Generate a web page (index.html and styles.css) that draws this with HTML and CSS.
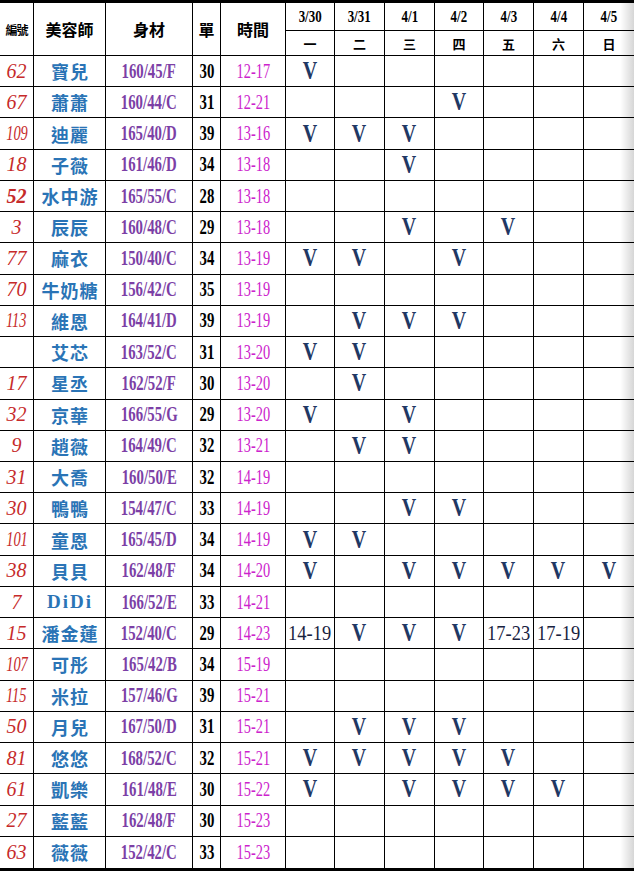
FILE: index.html
```html
<!DOCTYPE html>
<html lang="zh-Hant">
<head>
<meta charset="utf-8">
<title>美容師排班表</title>
<link rel="stylesheet" href="styles.css">
</head>
<body>
<div class="sheet">
  <div class="c hd hd-small span2">編號</div>
  <div class="c hd span2">美容師</div>
  <div class="c hd span2">身材</div>
  <div class="c hd span2">單</div>
  <div class="c hd span2">時間</div>
  <div class="c date"><span>3/30</span></div>
  <div class="c date"><span>3/31</span></div>
  <div class="c date"><span>4/1</span></div>
  <div class="c date"><span>4/2</span></div>
  <div class="c date"><span>4/3</span></div>
  <div class="c date"><span>4/4</span></div>
  <div class="c date last"><span>4/5</span></div>
  <div class="c wd">一</div>
  <div class="c wd">二</div>
  <div class="c wd">三</div>
  <div class="c wd">四</div>
  <div class="c wd">五</div>
  <div class="c wd">六</div>
  <div class="c wd last">日</div>

  <!-- row 1 -->
  <div class="c num"><span>62</span></div><div class="c name">寶兒</div><div class="c size"><span>160/45/F</span></div><div class="c dan"><span>30</span></div><div class="c time"><span>12-17</span></div>
  <div class="c v"><span>V</span></div><div class="c"></div><div class="c"></div><div class="c"></div><div class="c"></div><div class="c"></div><div class="c last"></div>
  <!-- row 2 -->
  <div class="c num"><span>67</span></div><div class="c name">蕭蕭</div><div class="c size"><span>160/44/C</span></div><div class="c dan"><span>31</span></div><div class="c time"><span>12-21</span></div>
  <div class="c"></div><div class="c"></div><div class="c"></div><div class="c v"><span>V</span></div><div class="c"></div><div class="c"></div><div class="c last"></div>
  <!-- row 3 -->
  <div class="c num n3"><span>109</span></div><div class="c name">迪麗</div><div class="c size"><span>165/40/D</span></div><div class="c dan"><span>39</span></div><div class="c time"><span>13-16</span></div>
  <div class="c v"><span>V</span></div><div class="c v"><span>V</span></div><div class="c v"><span>V</span></div><div class="c"></div><div class="c"></div><div class="c"></div><div class="c last"></div>
  <!-- row 4 -->
  <div class="c num"><span>18</span></div><div class="c name">子薇</div><div class="c size"><span>161/46/D</span></div><div class="c dan"><span>34</span></div><div class="c time"><span>13-18</span></div>
  <div class="c"></div><div class="c"></div><div class="c v"><span>V</span></div><div class="c"></div><div class="c"></div><div class="c"></div><div class="c last"></div>
  <!-- row 5 -->
  <div class="c num bold"><span>52</span></div><div class="c name">水中游</div><div class="c size"><span>165/55/C</span></div><div class="c dan"><span>28</span></div><div class="c time"><span>13-18</span></div>
  <div class="c"></div><div class="c"></div><div class="c"></div><div class="c"></div><div class="c"></div><div class="c"></div><div class="c last"></div>
  <!-- row 6 -->
  <div class="c num"><span>3</span></div><div class="c name">辰辰</div><div class="c size"><span>160/48/C</span></div><div class="c dan"><span>29</span></div><div class="c time"><span>13-18</span></div>
  <div class="c"></div><div class="c"></div><div class="c v"><span>V</span></div><div class="c"></div><div class="c v"><span>V</span></div><div class="c"></div><div class="c last"></div>
  <!-- row 7 -->
  <div class="c num"><span>77</span></div><div class="c name">麻衣</div><div class="c size"><span>150/40/C</span></div><div class="c dan"><span>34</span></div><div class="c time"><span>13-19</span></div>
  <div class="c v"><span>V</span></div><div class="c v"><span>V</span></div><div class="c"></div><div class="c v"><span>V</span></div><div class="c"></div><div class="c"></div><div class="c last"></div>
  <!-- row 8 -->
  <div class="c num"><span>70</span></div><div class="c name">牛奶糖</div><div class="c size"><span>156/42/C</span></div><div class="c dan"><span>35</span></div><div class="c time"><span>13-19</span></div>
  <div class="c"></div><div class="c"></div><div class="c"></div><div class="c"></div><div class="c"></div><div class="c"></div><div class="c last"></div>
  <!-- row 9 -->
  <div class="c num n3"><span>113</span></div><div class="c name">維恩</div><div class="c size"><span>164/41/D</span></div><div class="c dan"><span>39</span></div><div class="c time"><span>13-19</span></div>
  <div class="c"></div><div class="c v"><span>V</span></div><div class="c v"><span>V</span></div><div class="c v"><span>V</span></div><div class="c"></div><div class="c"></div><div class="c last"></div>
  <!-- row 10 -->
  <div class="c num"></div><div class="c name">艾芯</div><div class="c size"><span>163/52/C</span></div><div class="c dan"><span>31</span></div><div class="c time"><span>13-20</span></div>
  <div class="c v"><span>V</span></div><div class="c v"><span>V</span></div><div class="c"></div><div class="c"></div><div class="c"></div><div class="c"></div><div class="c last"></div>
  <!-- row 11 -->
  <div class="c num"><span>17</span></div><div class="c name">星丞</div><div class="c size"><span>162/52/F</span></div><div class="c dan"><span>30</span></div><div class="c time"><span>13-20</span></div>
  <div class="c"></div><div class="c v"><span>V</span></div><div class="c"></div><div class="c"></div><div class="c"></div><div class="c"></div><div class="c last"></div>
  <!-- row 12 -->
  <div class="c num"><span>32</span></div><div class="c name">京華</div><div class="c size"><span>166/55/G</span></div><div class="c dan"><span>29</span></div><div class="c time"><span>13-20</span></div>
  <div class="c v"><span>V</span></div><div class="c"></div><div class="c v"><span>V</span></div><div class="c"></div><div class="c"></div><div class="c"></div><div class="c last"></div>
  <!-- row 13 -->
  <div class="c num"><span>9</span></div><div class="c name">趙薇</div><div class="c size"><span>164/49/C</span></div><div class="c dan"><span>32</span></div><div class="c time"><span>13-21</span></div>
  <div class="c"></div><div class="c v"><span>V</span></div><div class="c v"><span>V</span></div><div class="c"></div><div class="c"></div><div class="c"></div><div class="c last"></div>
  <!-- row 14 -->
  <div class="c num"><span>31</span></div><div class="c name">大喬</div><div class="c size"><span>160/50/E</span></div><div class="c dan"><span>32</span></div><div class="c time"><span>14-19</span></div>
  <div class="c"></div><div class="c"></div><div class="c"></div><div class="c"></div><div class="c"></div><div class="c"></div><div class="c last"></div>
  <!-- row 15 -->
  <div class="c num"><span>30</span></div><div class="c name">鴨鴨</div><div class="c size"><span>154/47/C</span></div><div class="c dan"><span>33</span></div><div class="c time"><span>14-19</span></div>
  <div class="c"></div><div class="c"></div><div class="c v"><span>V</span></div><div class="c v"><span>V</span></div><div class="c"></div><div class="c"></div><div class="c last"></div>
  <!-- row 16 -->
  <div class="c num n3"><span>101</span></div><div class="c name">童恩</div><div class="c size"><span>165/45/D</span></div><div class="c dan"><span>34</span></div><div class="c time"><span>14-19</span></div>
  <div class="c v"><span>V</span></div><div class="c v"><span>V</span></div><div class="c"></div><div class="c"></div><div class="c"></div><div class="c"></div><div class="c last"></div>
  <!-- row 17 -->
  <div class="c num"><span>38</span></div><div class="c name">貝貝</div><div class="c size"><span>162/48/F</span></div><div class="c dan"><span>34</span></div><div class="c time"><span>14-20</span></div>
  <div class="c v"><span>V</span></div><div class="c"></div><div class="c v"><span>V</span></div><div class="c v"><span>V</span></div><div class="c v"><span>V</span></div><div class="c v"><span>V</span></div><div class="c v last"><span>V</span></div>
  <!-- row 18 -->
  <div class="c num"><span>7</span></div><div class="c name latin">DiDi</div><div class="c size"><span>166/52/E</span></div><div class="c dan"><span>33</span></div><div class="c time"><span>14-21</span></div>
  <div class="c"></div><div class="c"></div><div class="c"></div><div class="c"></div><div class="c"></div><div class="c"></div><div class="c last"></div>
  <!-- row 19 -->
  <div class="c num"><span>15</span></div><div class="c name">潘金蓮</div><div class="c size"><span>152/40/C</span></div><div class="c dan"><span>29</span></div><div class="c time"><span>14-23</span></div>
  <div class="c t"><span>14-19</span></div><div class="c v"><span>V</span></div><div class="c v"><span>V</span></div><div class="c v"><span>V</span></div><div class="c t"><span>17-23</span></div><div class="c t"><span>17-19</span></div><div class="c last"></div>
  <!-- row 20 -->
  <div class="c num n3"><span>107</span></div><div class="c name">可彤</div><div class="c size"><span>165/42/B</span></div><div class="c dan"><span>34</span></div><div class="c time"><span>15-19</span></div>
  <div class="c"></div><div class="c"></div><div class="c"></div><div class="c"></div><div class="c"></div><div class="c"></div><div class="c last"></div>
  <!-- row 21 -->
  <div class="c num n3"><span>115</span></div><div class="c name">米拉</div><div class="c size"><span>157/46/G</span></div><div class="c dan"><span>39</span></div><div class="c time"><span>15-21</span></div>
  <div class="c"></div><div class="c"></div><div class="c"></div><div class="c"></div><div class="c"></div><div class="c"></div><div class="c last"></div>
  <!-- row 22 -->
  <div class="c num"><span>50</span></div><div class="c name">月兒</div><div class="c size"><span>167/50/D</span></div><div class="c dan"><span>31</span></div><div class="c time"><span>15-21</span></div>
  <div class="c"></div><div class="c v"><span>V</span></div><div class="c v"><span>V</span></div><div class="c v"><span>V</span></div><div class="c"></div><div class="c"></div><div class="c last"></div>
  <!-- row 23 -->
  <div class="c num"><span>81</span></div><div class="c name">悠悠</div><div class="c size"><span>168/52/C</span></div><div class="c dan"><span>32</span></div><div class="c time"><span>15-21</span></div>
  <div class="c v"><span>V</span></div><div class="c v"><span>V</span></div><div class="c v"><span>V</span></div><div class="c v"><span>V</span></div><div class="c v"><span>V</span></div><div class="c"></div><div class="c last"></div>
  <!-- row 24 -->
  <div class="c num"><span>61</span></div><div class="c name">凱樂</div><div class="c size"><span>161/48/E</span></div><div class="c dan"><span>30</span></div><div class="c time"><span>15-22</span></div>
  <div class="c v"><span>V</span></div><div class="c"></div><div class="c v"><span>V</span></div><div class="c v"><span>V</span></div><div class="c v"><span>V</span></div><div class="c v"><span>V</span></div><div class="c last"></div>
  <!-- row 25 -->
  <div class="c num"><span>27</span></div><div class="c name">藍藍</div><div class="c size"><span>162/48/F</span></div><div class="c dan"><span>30</span></div><div class="c time"><span>15-23</span></div>
  <div class="c"></div><div class="c"></div><div class="c"></div><div class="c"></div><div class="c"></div><div class="c"></div><div class="c last"></div>
  <!-- row 26 -->
  <div class="c num end"><span>63</span></div><div class="c name end">薇薇</div><div class="c size end"><span>152/42/C</span></div><div class="c dan end"><span>33</span></div><div class="c time end"><span>15-23</span></div>
  <div class="c end"></div><div class="c end"></div><div class="c end"></div><div class="c end"></div><div class="c end"></div><div class="c end"></div><div class="c last end"></div>

  <div class="edge-shade"></div>
</div>
</body>
</html>
```

FILE: styles.css
```css
html, body {
  margin: 0;
  padding: 0;
  background: #ffffff;
}

.sheet {
  position: relative;
  box-sizing: border-box;
  width: 634px;
  height: 871px;
  border-top: 3px solid #000;
  border-bottom: 3px solid #000;
  display: grid;
  grid-template-columns: 34px 72px 87px 28px 65px 49px 50px 50px 49px 50px 50px 50px;
  grid-template-rows: 28px 25px repeat(26, 1fr);
  font-family: "Liberation Serif", "Noto Sans CJK TC", serif;
}

.c {
  box-sizing: border-box;
  border-right: 1px solid #000;
  border-bottom: 1px solid #000;
  display: flex;
  align-items: center;
  justify-content: center;
  overflow: hidden;
  white-space: nowrap;
  min-width: 0;
  min-height: 0;
}

.c > span {
  display: inline-block;
}

.c.last {
  border-right: none;
}

.c.end {
  border-bottom: none;
}

.span2 {
  grid-row: span 2;
}

.hd {
  font-family: "Noto Sans CJK TC", sans-serif;
  font-weight: 700;
  font-size: 16px;
  color: #000;
}

.hd-small {
  font-size: 12px;
  letter-spacing: -1px;
}

.date {
  font-weight: 700;
  font-size: 17px;
  color: #000;
}

.date > span {
  transform: scaleX(0.76);
}

.wd {
  font-family: "Noto Sans CJK TC", sans-serif;
  font-weight: 700;
  font-size: 13px;
  color: #000;
}

.num {
  font-style: italic;
  font-size: 20px;
  color: #c62a2a;
}

.num.n3 > span {
  transform: scaleX(0.72);
}

.num.bold {
  font-weight: 700;
}

.name {
  font-family: "Noto Sans CJK TC", sans-serif;
  font-weight: 700;
  font-size: 18px;
  letter-spacing: 1px;
  padding-left: 1px;
  color: #2a74b6;
}

.name.latin {
  font-family: "Liberation Serif", serif;
  font-weight: 700;
  font-size: 19px;
  letter-spacing: 2px;
}

.size {
  font-weight: 700;
  font-size: 20px;
  color: #7c3fa6;
}

.size > span {
  transform: scaleX(0.74);
}

.dan {
  font-weight: 700;
  font-size: 20px;
  color: #000;
}

.dan > span {
  transform: scaleX(0.74);
}

.time {
  font-size: 20px;
  color: #cc22cc;
}

.time > span {
  transform: scaleX(0.72);
}

.v {
  font-weight: 700;
  font-size: 25px;
  color: #1f3864;
}

.v > span {
  transform: scaleX(0.8);
}

.t {
  font-size: 22px;
  color: #18223f;
}

.t > span {
  transform: scaleX(0.84);
}

.edge-shade {
  position: absolute;
  top: -3px;
  right: 0;
  bottom: -3px;
  width: 14px;
  background: linear-gradient(to right, rgba(0, 0, 0, 0), rgba(0, 0, 0, 0.16));
  pointer-events: none;
}
```
